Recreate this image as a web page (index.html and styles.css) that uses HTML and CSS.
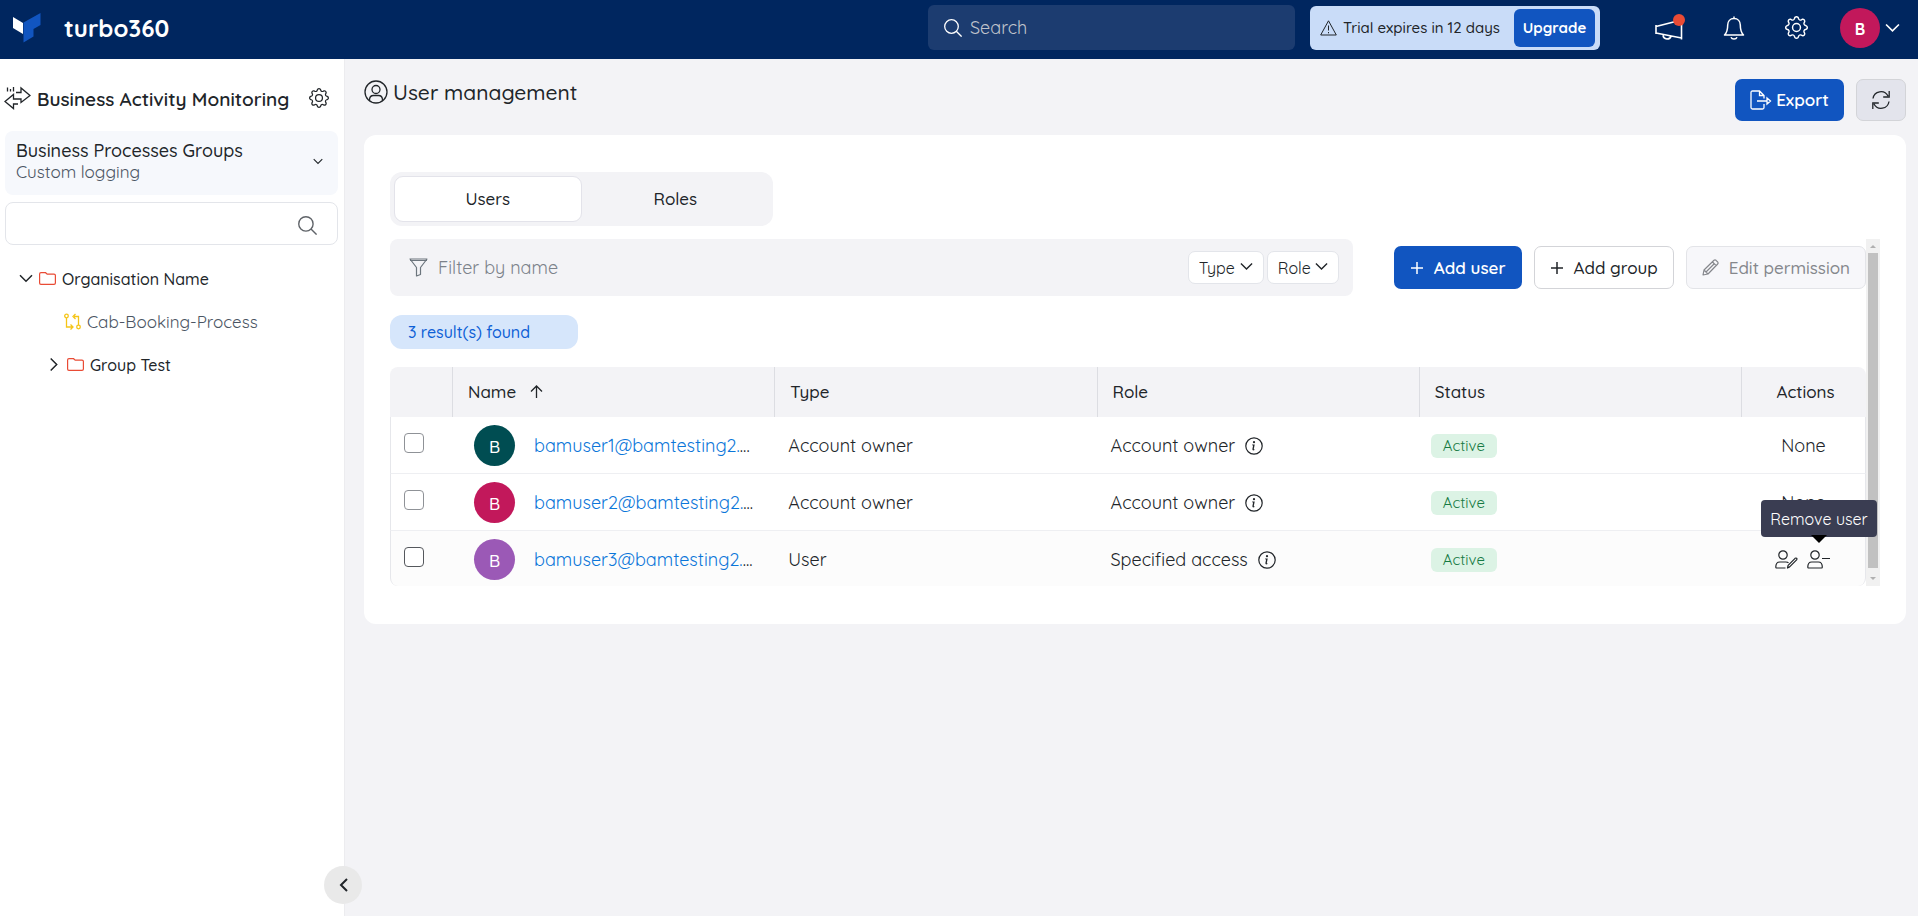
FILE: index.html
```html
<!DOCTYPE html>
<html lang="en">
<head>
<meta charset="utf-8">
<title>User management</title>
<link rel="stylesheet" href="styles.css">
</head>
<body>
<svg class="defs" width="0" height="0" aria-hidden="true">
  <symbol id="gear" viewBox="0 0 16 16"><path d="M8 4.75a3.25 3.25 0 1 0 0 6.5 3.25 3.25 0 0 0 0-6.5M5.75 8a2.25 2.25 0 1 1 4.5 0 2.25 2.25 0 0 1-4.5 0"/><path d="M9.8 1.34c-.53-1.79-3.07-1.79-3.6 0l-.09.32a.87.87 0 0 1-1.26.52l-.29-.16C2.9 1.13 1.12 2.92 2.02 4.56l.16.29a.87.87 0 0 1-.52 1.26l-.32.09c-1.79.53-1.79 3.07 0 3.6l.32.09a.87.87 0 0 1 .52 1.26l-.16.29c-.9 1.64.89 3.43 2.54 2.54l.29-.16a.87.87 0 0 1 1.26.52l.09.32c.53 1.79 3.07 1.79 3.6 0l.09-.32a.87.87 0 0 1 1.26-.52l.29.16c1.64.89 3.43-.9 2.54-2.54l-.16-.29a.87.87 0 0 1 .52-1.26l.32-.09c1.79-.53 1.79-3.07 0-3.6l-.32-.09a.87.87 0 0 1-.52-1.26l.16-.29c.89-1.64-.9-3.43-2.54-2.54l-.29.16a.87.87 0 0 1-1.26-.52zm-2.63.28c.24-.83 1.42-.83 1.66 0l.1.32a1.87 1.87 0 0 0 2.69 1.12l.29-.16c.76-.42 1.6.42 1.18 1.18l-.16.29a1.87 1.87 0 0 0 1.12 2.69l.32.1c.83.24.83 1.42 0 1.66l-.32.1a1.87 1.87 0 0 0-1.12 2.69l.16.29c.42.76-.42 1.6-1.18 1.18l-.29-.16a1.87 1.87 0 0 0-2.69 1.12l-.1.32c-.24.83-1.42.83-1.66 0l-.1-.32a1.87 1.87 0 0 0-2.69-1.12l-.29.16c-.76.42-1.6-.42-1.18-1.18l.16-.29a1.87 1.87 0 0 0-1.12-2.69l-.32-.1c-.83-.24-.83-1.42 0-1.66l.32-.1a1.87 1.87 0 0 0 1.12-2.69l-.16-.29c-.42-.76.42-1.6 1.18-1.18l.29.16a1.87 1.87 0 0 0 2.69-1.12z"/></symbol>
  <symbol id="search" viewBox="0 0 18 18"><g fill="none" stroke="currentColor" stroke-width="1.3"><circle cx="7.5" cy="7.5" r="6.8"/><path d="M12.3 12.3l5.3 5.3"/></g></symbol>
  <symbol id="chevron" viewBox="0 0 14 9"><path d="M1 1.2l6 6 6-6" fill="none" stroke="currentColor" stroke-width="1.5"/></symbol>
  <symbol id="folder" viewBox="0 0 17 13"><path d="M.6 2V11q0 1.4 1.3 1.4H15q1.4 0 1.4-1.3V3.4Q16.400 2.200 15 2.200H8.200L6.600.7H2Q.6.7.6 2z" fill="none" stroke="currentColor" stroke-width="1.200"/></symbol>
  <symbol id="plus" viewBox="0 0 14 14"><path d="M7 1v12M1 7h12" fill="none" stroke="currentColor" stroke-width="1.5"/></symbol>
  <symbol id="info" viewBox="0 0 18 18"><circle cx="9" cy="9" r="8.200" fill="none" stroke="currentColor" stroke-width="1.200"/><circle cx="9" cy="5.200" r="1.100"/><path d="M7.200 7.500h2.500l-.9 4.600q-.1.700.9.400l-.1.600q-2.500.9-2.200-1l.7-3.600-1-.3z"/></symbol>
</svg>

<header class="topbar">
  <a class="brand" href="#">
    <svg width="28" height="30" viewBox="0 0 28 30"><path d="M0 4l10 6v11L0 15z" fill="#fff"/><path d="M10.500 9.500L27.500 0v12l-7 4v7.500L10.500 29.500z" fill="#1155c0"/></svg>
    <span>turbo360</span>
  </a>
  <label class="global-search">
    <svg width="18" height="18"><use href="#search"/></svg>
    <input type="search" placeholder="Search" aria-label="Search">
  </label>
  <div class="trial">
    <svg width="17" height="16" viewBox="0 0 17 16" fill="none" stroke="currentColor"><path d="M8.500.8L16.300 15H.7z" stroke-linejoin="round"/><path d="M8.500 5.500v5M8.500 12v1.300"/></svg>
    <span>Trial expires in 12 days</span>
    <button type="button" class="upgrade">Upgrade</button>
  </div>
  <nav class="top-icons">
    <button type="button" class="bare announce" aria-label="Announcements">
      <svg width="28" height="24" viewBox="0 0 28 24" fill="none" stroke="currentColor" stroke-width="1.600"><path d="M1 9v9M1 10.500L26.500 4M1 17l25.500 5M26.500 2v21.500M8 18.500q0 4 4 4.500 3.500 0 4-3"/></svg>
      <span class="dot"></span>
    </button>
    <button type="button" class="bare" aria-label="Notifications">
      <svg width="22" height="24" viewBox="0 0 22 24" fill="none" stroke="currentColor" stroke-width="1.500"><path d="M11 2.500c-4 0-6.300 3-6.300 6.500 0 5-1.200 8-3.200 10h19c-2-2-3.200-5-3.200-10 0-3.500-2.300-6.500-6.300-6.500zM11 .5v2M8 21.200q.7 1.800 3 1.800t3-1.800" stroke-linejoin="round"/></svg>
    </button>
    <button type="button" class="bare" aria-label="Settings"><svg width="23" height="23"><use href="#gear"/></svg></button>
    <button type="button" class="bare account" aria-label="Account">
      <span class="avatar">B</span>
      <svg width="15" height="10"><use href="#chevron"/></svg>
    </button>
  </nav>
</header>

<div class="layout">
  <aside class="sidebar">
    <div class="module">
      <svg width="27" height="24" viewBox="0 0 27 24" fill="none" stroke="currentColor" stroke-width="1.300"><path d="M12 6.500h5V2l9 7.500-9 7V13H9.500V8.500L1 15.500 9.500 22.500V18H14"/><path d="M3.500 1.500v4M6.500 3v2.500M9.500 1v4.500"/></svg>
      <h2>Business Activity Monitoring</h2>
      <button type="button" class="bare" aria-label="Module settings"><svg width="20" height="20"><use href="#gear"/></svg></button>
    </div>
    <button type="button" class="group-picker">
      <span class="group-text"><span class="group-name">Business Processes Groups</span><span class="group-sub">Custom logging</span></span>
      <svg width="10" height="7"><use href="#chevron"/></svg>
    </button>
    <label class="side-search">
      <input type="text" aria-label="Search groups">
      <svg width="19" height="19"><use href="#search"/></svg>
    </label>
    <ul class="tree">
      <li class="node">
        <svg width="14" height="9"><use href="#chevron"/></svg>
        <svg class="red" width="17" height="13"><use href="#folder"/></svg>
        <span>Organisation Name</span>
      </li>
      <li class="node leaf">
        <svg width="17" height="17" viewBox="0 0 17 17" fill="none" stroke="#f5c518" stroke-width="1.300"><circle cx="2.500" cy="3" r="1.800"/><circle cx="14.500" cy="14" r="1.800"/><path d="M2.500 5v9h6M14.500 12V3.500H10M6.500 11.500L9 14l-2.500 2.500M11.500 1L9 3.500 11.500 6"/></svg>
        <span>Cab-Booking-Process</span>
      </li>
      <li class="node child">
        <svg class="turned" width="14" height="9"><use href="#chevron"/></svg>
        <svg class="red" width="17" height="13"><use href="#folder"/></svg>
        <span>Group Test</span>
      </li>
    </ul>
    <button type="button" class="collapse" aria-label="Collapse sidebar"><svg width="9" height="14" viewBox="0 0 9 14"><path d="M8 1L2 7l6 6" fill="none" stroke="currentColor" stroke-width="2"/></svg></button>
  </aside>

  <main class="content">
    <div class="page-head">
      <h1>
        <svg width="24" height="24" viewBox="0 0 24 24" fill="none" stroke="currentColor" stroke-width="1.300"><circle cx="12" cy="12" r="11"/><circle cx="12" cy="9.500" r="4"/><path d="M5.500 20q0-4.500 4-4.500h5q4 0 4 4.500"/></svg>
        User management
      </h1>
      <div class="head-actions">
        <button type="button" class="btn primary export">
          <svg width="22" height="20" viewBox="0 0 22 20" fill="none" stroke="currentColor" stroke-width="1.300"><path d="M14 8.500V5.500L9.500 1H2.500Q1 1 1 2.500v15Q1 19 2.500 19H12.500Q14 19 14 17.500V14M9.500 1v4.500H14M7 11h10M17 8l3.500 3L17 14z"/></svg>
          Export
        </button>
        <button type="button" class="btn refresh" aria-label="Refresh">
          <svg width="20" height="20" viewBox="0 0 20 20" fill="none" stroke="currentColor" stroke-width="1.300"><path d="M2 8.500a8 8 0 0 1 15-2.500M18.200 1v6h-6M18 11.500a8 8 0 0 1-15 2.500M1.800 19v-6h6"/></svg>
        </button>
      </div>
    </div>

    <section class="card">
      <div class="tabs" role="tablist">
        <button type="button" role="tab" class="tab active" aria-selected="true">Users</button>
        <button type="button" role="tab" class="tab" aria-selected="false">Roles</button>
      </div>
      <div class="scroller">
        <div class="pane">
          <div class="toolbar">
            <div class="filter">
              <svg width="19" height="19" viewBox="0 0 19 19" fill="none" stroke="currentColor" stroke-width="1.200"><path d="M1 1h17L11.500 9.500V16.500L7.500 18V9.500z M1 2.500h17" stroke-linejoin="round"/></svg>
              <input type="text" placeholder="Filter by name" aria-label="Filter by name">
              <label class="pick wide"><select aria-label="Type"><option>Type</option></select><svg width="13" height="9"><use href="#chevron"/></svg></label>
              <label class="pick"><select aria-label="Role"><option>Role</option></select><svg width="13" height="9"><use href="#chevron"/></svg></label>
            </div>
            <div class="tools">
              <button type="button" class="btn primary"><svg width="14" height="14"><use href="#plus"/></svg>Add user</button>
              <button type="button" class="btn outline"><svg width="14" height="14"><use href="#plus"/></svg>Add group</button>
              <button type="button" class="btn outline" disabled><svg width="17" height="17" viewBox="0 0 17 17" fill="none" stroke="currentColor" stroke-width="1.200"><path d="M1 16l1-5L12 1.300q1-.8 2 0l1.700 1.700q.8 1 0 2L6 15zM2 11l4 4M10.500 3l3.700 3.700M4 13l8-8" stroke-linejoin="round"/></svg>Edit permission</button>
            </div>
          </div>
          <div class="results">3 result(s) found</div>
          <table class="users">
            <colgroup><col class="c-check"><col><col><col><col><col class="c-act"></colgroup>
            <thead>
              <tr><th aria-label="Select"></th><th>Name <svg class="sort" width="13" height="13" viewBox="0 0 13 13" fill="none" stroke="currentColor" stroke-width="1.300"><path d="M6.500 13V1M1 6.500L6.500 1 12 6.500"/></svg></th><th>Type</th><th>Role</th><th>Status</th><th class="act">Actions</th></tr>
            </thead>
            <tbody>
              <tr>
                <td><input type="checkbox" aria-label="Select bamuser1"></td>
                <td><div class="who"><span class="avatar teal">B</span><span class="mail"><a href="#">bamuser1@bamtesting2.</a>...</span></div></td>
                <td>Account owner</td>
                <td><span class="role">Account owner <svg width="18" height="18"><use href="#info"/></svg></span></td>
                <td class="st"><span class="badge">Active</span></td>
                <td class="act">None</td>
              </tr>
              <tr>
                <td><input type="checkbox" aria-label="Select bamuser2"></td>
                <td><div class="who"><span class="avatar">B</span><span class="mail"><a href="#">bamuser2@bamtesting2.</a>...</span></div></td>
                <td>Account owner</td>
                <td><span class="role">Account owner <svg width="18" height="18"><use href="#info"/></svg></span></td>
                <td class="st"><span class="badge">Active</span></td>
                <td class="act">None</td>
              </tr>
              <tr class="hovered">
                <td><input type="checkbox" aria-label="Select bamuser3"></td>
                <td><div class="who"><span class="avatar purple">B</span><span class="mail"><a href="#">bamuser3@bamtesting2.</a>...</span></div></td>
                <td>User</td>
                <td><span class="role">Specified access <svg width="18" height="18"><use href="#info"/></svg></span></td>
                <td class="st"><span class="badge">Active</span></td>
                <td class="act">
                  <div class="row-actions">
                    <button type="button" class="bare" aria-label="Edit user"><svg width="23" height="19" viewBox="0 0 23 19" fill="none" stroke="currentColor" stroke-width="1.200"><circle cx="8" cy="5" r="4.200"/><path d="M10.500 18H1.500q-.7 0-.7-1 0-5 4-5h6q2 0 2.700 1"/><path d="M12.500 18l.6-2.700 7-7q.8-.6 1.500 0t0 1.600l-7 7z" stroke-linejoin="round"/></svg></button>
                    <button type="button" class="bare remove" aria-label="Remove user" aria-describedby="tip"><svg width="23" height="19" viewBox="0 0 23 19" fill="none" stroke="currentColor" stroke-width="1.200"><circle cx="8" cy="5" r="4.200"/><path d="M15 18H1.500q-.7 0-.7-1 0-5 4-5h6.500q4 0 4 5 0 1-.7 1zM15 8.500h8"/></svg><span class="tooltip" id="tip" role="tooltip">Remove user</span></button>
                  </div>
                </td>
              </tr>
            </tbody>
          </table>
        </div>
        <div class="track" aria-hidden="true"><span class="arrow up"></span><span class="thumb"></span><span class="arrow down"></span></div>
      </div>
    </section>
  </main>
</div>
</body>
</html>
```

FILE: styles.css
```css
* { box-sizing: border-box; }

body {
  margin: 0;
  min-height: 100vh;
  display: flex;
  flex-direction: column;
  font: 17px/24px Quicksand, Inter, sans-serif;
  color: #212529;
  background: #f3f3f6;
}

button, input, select { font: inherit; color: inherit; }
button { cursor: pointer; }
svg { flex: none; display: block; fill: currentColor; }
svg[fill="none"] { fill: none; }
.defs { position: absolute; }
h1, h2 { margin: 0; }

.bare { display: flex; align-items: center; padding: 0; border: 0; background: none; }

/* Top bar */
.topbar {
  height: 59px;
  flex: none;
  display: flex;
  align-items: center;
  padding: 0 18px 4px 13px;
  color: #fff;
  background: #00265f;
}
.brand {
  display: flex;
  align-items: center;
  gap: 23px;
  margin-right: auto;
  font-size: 24px;
  font-weight: 700;
  color: #fff;
  text-decoration: none;
}
.global-search {
  width: 367px;
  height: 45px;
  display: flex;
  align-items: center;
  gap: 8px;
  padding: 0 16px;
  margin-right: 15px;
  border-radius: 6px;
  background: #1c3c70;
}
.global-search input {
  flex: 1;
  min-width: 0;
  padding: 0;
  border: 0;
  outline: 0;
  font-size: 18px;
  background: none;
}
.global-search input::placeholder { color: #c0c4cc; opacity: 1; }
.trial {
  width: 290px;
  height: 44px;
  display: flex;
  align-items: center;
  gap: 6px;
  padding: 0 5px 0 10px;
  border-radius: 6px;
  font-size: 15px;
  font-weight: 500;
  white-space: nowrap;
  color: #212529;
  background: #c9dcf8;
}
.upgrade {
  width: 81px;
  height: 38px;
  margin-left: auto;
  padding: 0;
  border: 0;
  border-radius: 6px;
  font-weight: 700;
  color: #fff;
  background: #1155c0;
}
.top-icons {
  display: flex;
  align-items: center;
  gap: 40px;
  margin-left: 55px;
}
.announce { position: relative; }
.dot {
  position: absolute;
  top: -2px;
  right: -2px;
  width: 12px;
  height: 12px;
  border-radius: 50%;
  background: #e94b35;
}
.account { gap: 5px; margin-left: -8px; }
.avatar {
  flex: none;
  width: 40px;
  height: 40px;
  display: grid;
  place-items: center;
  padding-top: 2px;
  border-radius: 50%;
  font-size: 17px;
  font-weight: 600;
  color: #fff;
  background: #c2185b;
}
.account .avatar { font-size: 16px; font-weight: 700; }

/* Sidebar */
.layout { flex: 1; display: flex; }
.sidebar {
  position: relative;
  flex: none;
  width: 345px;
  padding: 24px 6px 0 5px;
  background: #fff;
  border-right: 1px solid #ececef;
}
.module { display: flex; align-items: center; height: 30px; margin: 0 0 18px -1px; }
.module h2 { margin: 2px auto 0 6px; font-size: 19px; font-weight: 600; white-space: nowrap; }
.module .bare { margin-right: 9px; }
.group-picker {
  width: 100%;
  height: 64px;
  display: flex;
  align-items: center;
  justify-content: space-between;
  padding: 0 15px 4px 11px;
  margin-bottom: 7px;
  border: 0;
  border-radius: 8px;
  text-align: left;
  background: #f6f8fc;
}
.group-text { display: flex; flex-direction: column; line-height: 21px; }
.group-name { font-size: 18px; font-weight: 500; }
.group-sub { font-size: 17px; color: #4b5563; }
.side-search {
  height: 43px;
  display: flex;
  align-items: center;
  padding: 3px 20px 0 12px;
  border: 1px solid #e3e5ea;
  border-radius: 8px;
  color: #5f6368;
}
.side-search input { flex: 1; min-width: 0; border: 0; outline: 0; background: none; }
.tree { list-style: none; margin: 12px 0 0; padding: 0; }
.node {
  height: 43px;
  display: flex;
  align-items: center;
  gap: 6px;
  padding-left: 14px;
  font-size: 16px;
  font-weight: 500;
}
.node.leaf { padding-left: 59px; font-size: 17px; font-weight: 400; color: #4b5563; }
.node.child { padding-left: 42px; }
.turned { transform: rotate(-90deg); }
.red { color: #e94b35; }
.collapse {
  position: absolute;
  right: -18px;
  bottom: 12px;
  width: 38px;
  height: 38px;
  display: grid;
  place-items: center;
  padding: 0;
  border: 0;
  border-radius: 50%;
  background: #e9e9e9;
}

/* Content */
.content { flex: 1; min-width: 0; padding: 20px 12px 20px 19px; }
.page-head { display: flex; align-items: flex-start; justify-content: space-between; margin-bottom: 14px; }
.page-head h1 {
  display: flex;
  align-items: center;
  gap: 5px;
  padding-top: 1px;
  font-size: 21px;
  font-weight: 500;
}
.head-actions { display: flex; gap: 12px; }
.btn {
  height: 43px;
  display: flex;
  align-items: center;
  justify-content: center;
  gap: 10px;
  padding: 0 14px;
  border: 1px solid transparent;
  border-radius: 7px;
  font-size: 17px;
  font-weight: 500;
  white-space: nowrap;
}
.primary { font-weight: 600; color: #fff; background: #1155c0; }
.outline { border-color: #d3d4d8; background: #fff; }
.btn:disabled { color: #85878c; border-color: #e3e4e8; background: #f7f7fa; }
.export { width: 109px; height: 42px; gap: 4px; }
.refresh { width: 50px; height: 42px; border-color: #d3d4d8; background: #e3e4ec; }

.card { padding: 37px 26px 38px 26px; border-radius: 12px; background: #fff; }
.tabs {
  width: 383px;
  height: 54px;
  display: flex;
  padding: 4px;
  margin-bottom: 13px;
  border-radius: 12px;
  background: #f3f3f6;
}
.tab { flex: 1; border: 1px solid transparent; border-radius: 9px; font-weight: 500; background: none; }
.tab.active { border-color: #e3e3ea; background: #fff; }

.scroller { display: flex; }
.pane { flex: 1; min-width: 0; }
.toolbar { display: flex; align-items: center; gap: 41px; margin-bottom: 19px; }
.filter {
  flex: 1;
  height: 57px;
  display: flex;
  align-items: center;
  gap: 3px;
  padding: 0 14px 0 19px;
  border-radius: 8px;
  color: #6c757d;
  background: #f3f3f6;
}
.filter input { flex: 1; min-width: 0; padding: 0 7px; border: 0; outline: 0; font-size: 18px; background: none; }
.filter input::placeholder { color: #7b828a; opacity: 1; }
.pick { display: grid; align-items: center; color: #212529; }
.pick select {
  grid-area: 1 / 1;
  width: 72px;
  height: 33px;
  padding: 0 10px;
  border: 1px solid #e3e5ea;
  border-radius: 7px;
  appearance: none;
  font-size: 16px;
  background: #fff;
}
.pick.wide select { width: 76px; }
.pick svg { grid-area: 1 / 1; justify-self: end; margin: 0 11px 2px 0; pointer-events: none; }
.tools { display: flex; gap: 12px; }
.tools .btn { padding: 0 15px; }
.results {
  width: 188px;
  height: 34px;
  padding: 5px 18px;
  margin-bottom: 18px;
  border-radius: 12px;
  font-size: 16px;
  font-weight: 500;
  color: #0d5fd6;
  background: #d6e6fb;
}

.users { width: 100%; table-layout: fixed; border-collapse: separate; border-spacing: 0; }
.c-check { width: 63px; }
.c-act { width: 124px; }
.users th {
  height: 50px;
  padding: 0 15px;
  border-right: 1px solid #dcdde2;
  text-align: left;
  font-weight: 500;
  background: #f3f3f6;
}
.users th:first-child { border-top-left-radius: 8px; }
.users th:last-child { border-right: 0; border-top-right-radius: 8px; }
.sort { display: inline-block; margin-left: 9px; }
.users td { height: 57px; padding: 1px 13px 0; border-bottom: 1px solid #eeeff2; font-size: 18px; }
.users td:first-child { border-left: 1px solid #e6e7eb; }
.users td:last-child { border-right: 1px solid #e6e7eb; }
.users .hovered td { height: 55px; padding-top: 2px; border-bottom: 0; background: #fcfcfc; }
.users .hovered td:first-child { border-bottom-left-radius: 8px; }
.users .hovered td:last-child { border-bottom-right-radius: 8px; }
.users th.act { padding: 0 0 0 3px; text-align: center; }
.users td.act { padding-left: 0; padding-right: 0; text-align: center; }
.users td input {
  display: block;
  width: 20px;
  height: 20px;
  margin: 0 0 5px;
  border: 1px solid #8f9297;
  border-radius: 4px;
  appearance: none;
  background: #fff;
}
.users .hovered input { border-color: #55585d; }
.who { display: flex; align-items: center; gap: 19px; padding-left: 8px; }
.who .avatar { width: 41px; height: 41px; font-weight: 500; }
.avatar.teal { background: #004d52; }
.avatar.purple { background: #9b59b6; }
.mail { white-space: nowrap; }
.mail a { color: #0b76d9; text-decoration: none; }
.role { display: flex; align-items: center; gap: 10px; }
.users td.st { padding-left: 11px; }
.badge {
  display: inline-block;
  padding: 0 12px;
  border-radius: 6px;
  font-size: 15px;
  color: #157a43;
  background: #dcf3e5;
}
.row-actions { display: flex; justify-content: center; gap: 9px; padding-right: 2px; }
.remove { position: relative; }
.tooltip {
  position: absolute;
  right: -47px;
  bottom: 32px;
  width: 116px;
  padding: 7px 0 6px;
  border-radius: 4px;
  text-align: center;
  font-size: 16px;
  color: #fff;
  background: #3a3d52;
}
.tooltip::after {
  content: "";
  position: absolute;
  top: 35px;
  left: 50px;
  border: 8px solid transparent;
  border-bottom: 0;
  border-top-color: #000;
}

.track { width: 14px; display: flex; flex-direction: column; align-items: center; background: #f1f1f1; }
.thumb { flex: 1; width: 10px; background: #c1c1c1; }
.arrow { border: 3px solid transparent; }
.arrow.up { height: 9px; margin-bottom: 5px; border-bottom: 3px solid #b0b0b0; }
.arrow.down { height: 9px; margin-top: 9px; border-top: 3px solid #b0b0b0; }
```
